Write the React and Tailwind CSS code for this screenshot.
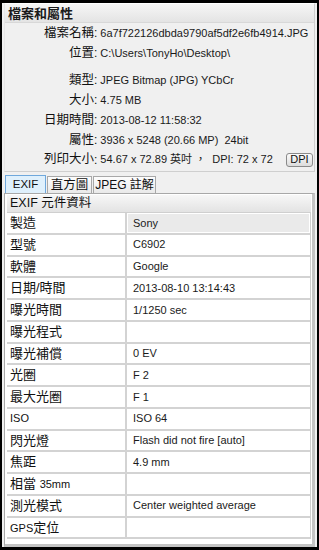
import React from "react";

const info = [
  { k: "檔案名稱", v: "6a7f722126dbda9790af5df2e6fb4914.JPG\u00a0\u00a0\u00a0[" },
  { k: "位置", v: "C:\\Users\\TonyHo\\Desktop\\" },
  null,
  { k: "類型", v: "JPEG Bitmap (JPG) YCbCr" },
  { k: "大小", v: "4.75 MB" },
  { k: "日期時間", v: "2013-08-12 11:58:32" },
  { k: "屬性", v: "3936 x 5248 (20.66 MP)\u00a0\u00a024bit" },
];

const rows = [
  ["製造", "Sony"],
  ["型號", "C6902"],
  ["軟體", "Google"],
  ["日期/時間", "2013-08-10 13:14:43"],
  ["曝光時間", "1/1250 sec"],
  ["曝光程式", ""],
  ["曝光補償", "0 EV"],
  ["光圈", "F 2"],
  ["最大光圈", "F 1"],
  ["ISO", "ISO 64"],
  ["閃光燈", "Flash did not fire [auto]"],
  ["焦距", "4.9 mm"],
  ["相當 35mm", ""],
  ["測光模式", "Center weighted average"],
  ["GPS定位", ""],
];

function Label({ children }) {
  return (
    <div className="w-[89px] shrink-0 text-right text-[12.5px] text-[#111]">
      {children}
    </div>
  );
}

export default function App() {
  return (
    <div className="w-[319px] h-[550px] bg-black pt-[3px] pl-[2px] pr-[2px] pb-[3px] font-['Liberation_Sans','Noto_Sans_CJK_TC',sans-serif] overflow-hidden">
      <div className="w-full h-full bg-[#f0f0f0] flex flex-col">
        {/* Top info box */}
        <div className="mx-[2px] h-[169px] border border-[#cfcfcf] border-t-white border-l-[#e6e6e6] bg-[#f0f0f0] flex flex-col">
          <div className="h-[19px] shrink-0 bg-gradient-to-b from-[#f6f6f6] to-[#e4e4e4] border-b border-[#d8d8d8] flex items-center pl-[3px]">
            <span className="text-[13px] font-bold text-[#1a1a1a] leading-none">檔案和屬性</span>
          </div>
          <div className="flex flex-col">
            {info.map((r, i) =>
              r === null ? (
                <div key={i} className="h-[7px]" />
              ) : (
                <div key={i} className="h-[20px] flex items-center whitespace-nowrap overflow-hidden">
                  <Label>{r.k}</Label>
                  <span className="text-[12px] text-[#111] mr-[3px]">:</span>
                  <span className="text-[11px] text-[#1a1a1a]">{r.v}</span>
                </div>
              )
            )}
            <div className="h-[19px] flex items-center whitespace-nowrap">
              <Label>列印大小</Label>
              <span className="text-[12px] text-[#111] mr-[3px]">:</span>
              <span className="text-[11px] text-[#1a1a1a]">54.67 x 72.89 英吋 ，&nbsp;&nbsp;DPI: 72 x 72</span>
              <div className="ml-auto mr-[1px] h-[14px] w-[27px] rounded-[3px] border border-[#8a8a8a] bg-gradient-to-b from-[#fbfbfb] to-[#dcdcdc] flex items-center justify-center text-[11px] text-[#111] leading-none">
                DPI
              </div>
            </div>
          </div>
        </div>

        {/* Tabs */}
        <div className="h-[21px] shrink-0 flex items-end pl-[3px] gap-[1px]">
          <div className="h-[18px] w-[41px] bg-[#dff0fc] border border-b-0 border-[#6fa8dc] flex items-center justify-center text-[11.5px] text-[#111]">
            EXIF
          </div>
          <div className="h-[17px] w-[45px] bg-gradient-to-b from-[#fdfdfd] to-[#e9e9e9] border border-b-0 border-[#a8a8a8] flex items-center justify-center text-[12.5px] text-[#111]">
            直方圖
          </div>
          <div className="h-[17px] w-[63px] bg-gradient-to-b from-[#fdfdfd] to-[#e9e9e9] border border-b-0 border-[#a8a8a8] flex items-center justify-center text-[12px] text-[#111]">
            JPEG 註解
          </div>
        </div>

        {/* Table frame */}
        <div className="flex-1 mx-[2px] border border-[#a8a8a8] border-r-[3px] border-r-[#c4c4c4] border-b-[3px] border-b-[#c4c4c4] bg-white flex flex-col p-[1px] pl-[2px] overflow-hidden">
          <div className="h-[18px] shrink-0 bg-gradient-to-b from-[#f7f7f7] to-[#e3e3e3] border-b border-[#cfcfcf] flex items-center pl-[3px] text-[12.5px] text-[#111]">
            EXIF 元件資料
          </div>
          <div className="flex flex-col border-r border-[#cfcfcf]">
            {rows.map(([k, v], i) => (
              <div key={i} className="h-[21.75px] flex border-b-2 border-[#d3d3d3]">
                <div className="w-[120px] shrink-0 border-r-2 border-[#d3d3d3] flex items-center pl-[3px] text-[13px] text-[#111] whitespace-nowrap">
                  {k === "相當 35mm" ? (
                    <span>
                      相當 <span className="text-[11px]">35mm</span>
                    </span>
                  ) : k === "GPS定位" ? (
                    <span>
                      <span className="text-[11px]">GPS</span>定位
                    </span>
                  ) : k === "ISO" ? (
                    <span className="text-[11px]">ISO</span>
                  ) : (
                    k
                  )}
                </div>
                <div
                  className={
                    i === 0
                      ? "flex-1 bg-[#eaeaea] border border-white flex items-center pl-[5px] text-[11px] text-[#1a1a1a] whitespace-nowrap"
                      : "flex-1 flex items-center pl-[6px] text-[11px] text-[#1a1a1a] whitespace-nowrap"
                  }
                >
                  {v}
                </div>
              </div>
            ))}
          </div>
        </div>
      </div>
    </div>
  );
}
